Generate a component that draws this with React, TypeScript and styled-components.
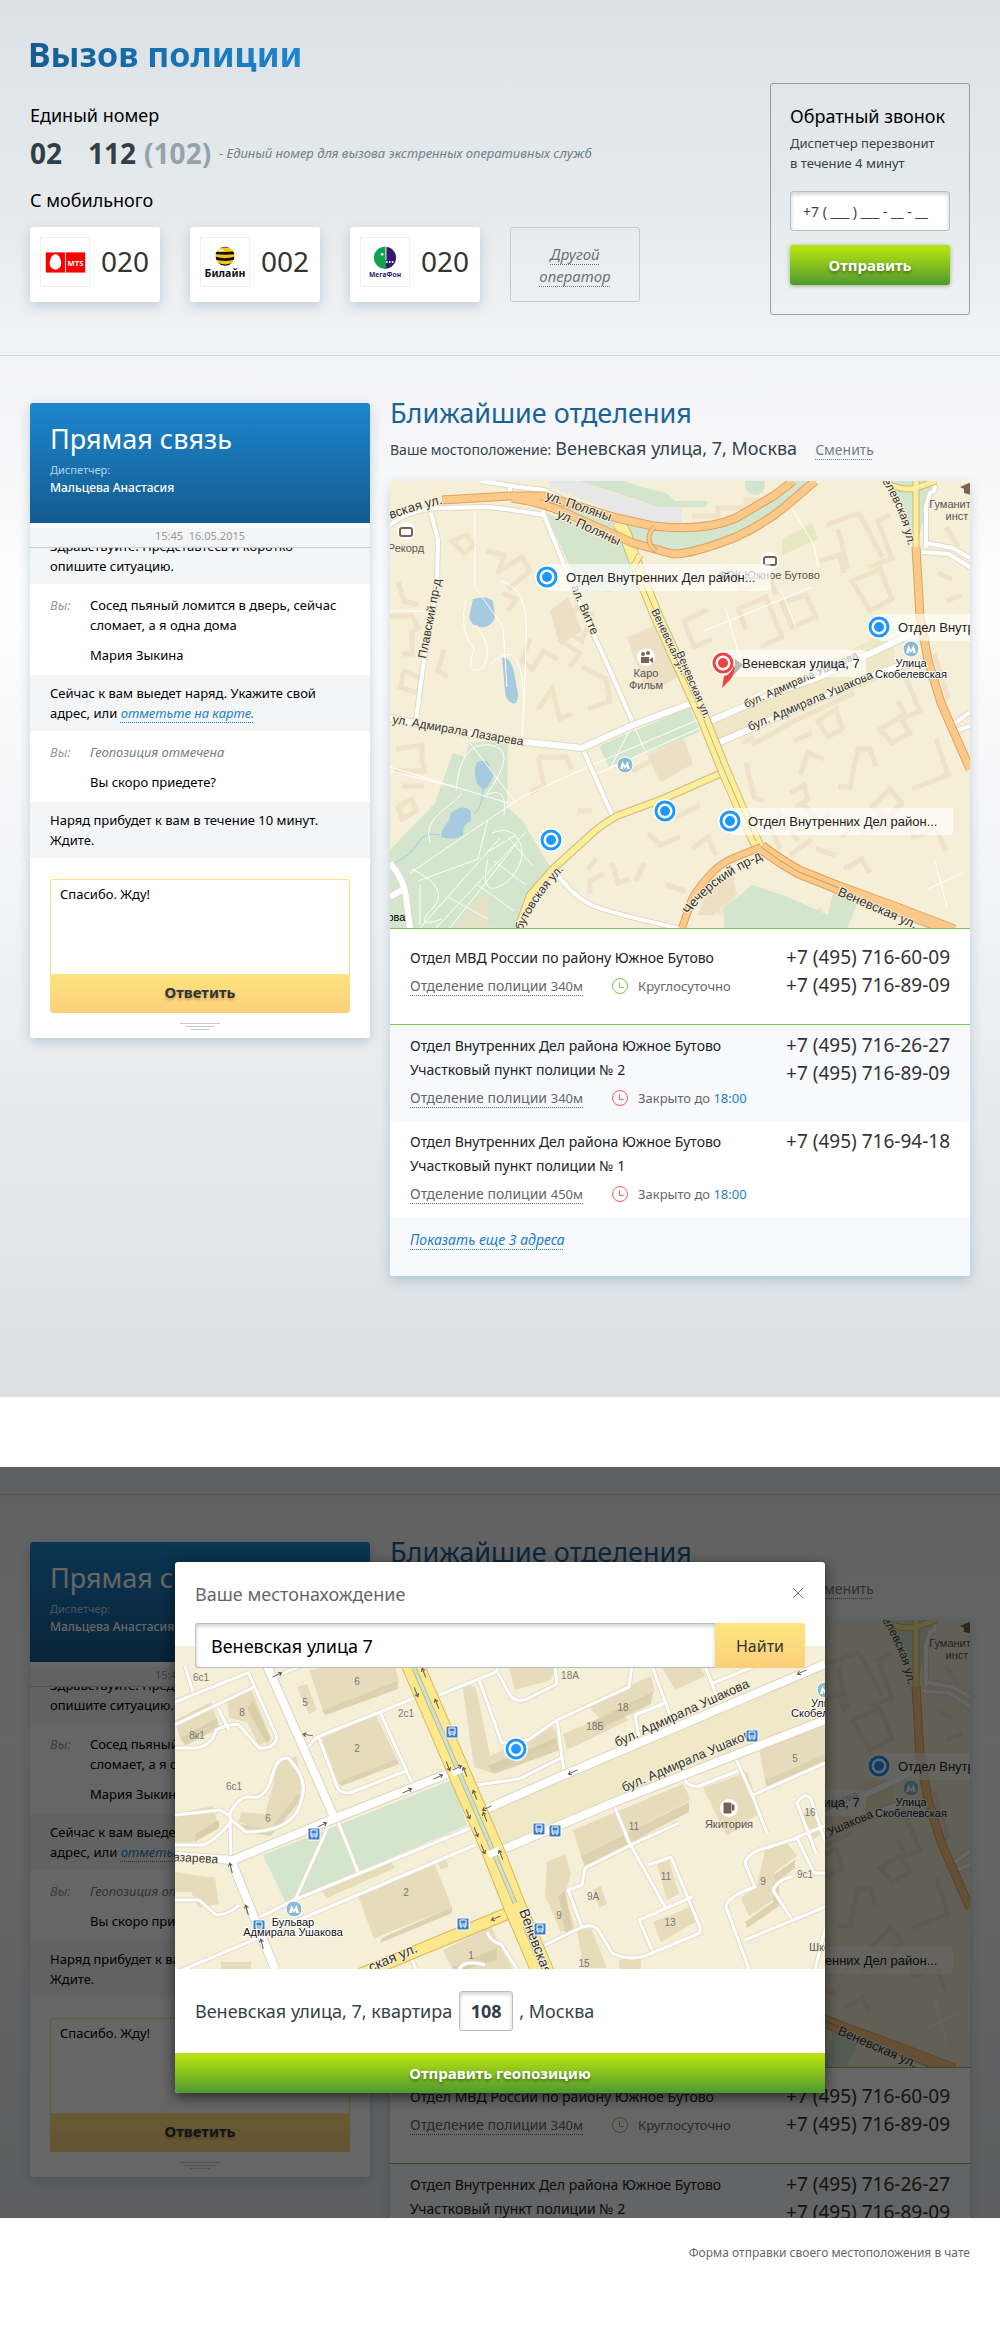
import React, { useId } from 'react';
import styled, { createGlobalStyle, css } from 'styled-components';

const mapFont = '"Liberation Sans", Arial, sans-serif';

const Global = createGlobalStyle`
  *, *::before, *::after { box-sizing: border-box; }
  body { margin: 0; background: #fff; color: #000; font-family: "Noto Sans", "Open Sans", sans-serif; font-size: 13px; line-height: 20px; }
  h1, h2, h3, p, ul { margin: 0; padding: 0; font-weight: 400; }
  ul { list-style: none; }
  button, input, textarea { font-family: inherit; margin: 0; }
  button { cursor: pointer; }
`;

/* ---------- shared ---------- */

const pageGradient = 'linear-gradient(#dbe1e5 0, #e7ebee 220px, #f2f3f5 356px, #fefefe 600px, #f2f3f5 900px, #d9dfe3 1397px)';
const cardShadow = '0 4px 12px rgba(110, 150, 180, 0.4)';

const DottedLink = styled.a<{ $size?: number; $color?: string; $italic?: boolean }>`
  color: ${(p) => p.$color || '#6b7376'};
  font-size: ${(p) => p.$size || 14}px;
  font-style: ${(p) => (p.$italic ? 'italic' : 'normal')};
  text-decoration: underline dotted 1px;
  text-underline-offset: 4px;
  text-decoration-skip-ink: none;
`;

const GreenButton = styled.button<{ $wide?: boolean }>`
  display: block;
  width: 100%;
  height: 40px;
  border: 0;
  border-radius: ${(p) => (p.$wide ? '0 0 3px 3px' : '3px')};
  background: linear-gradient(#b3e011 10%, #4f9a30);
  box-shadow: ${(p) => (p.$wide ? 'none' : '0 1px 4px rgba(80, 150, 50, 0.6)')};
  color: #fff;
  font-size: 15px;
  font-weight: 700;
  text-shadow: 0 2px 3px rgba(0, 0, 0, 0.4);
`;

const insetField = css`
  border: 1px solid #b9c0c4;
  border-radius: 3px;
  background: #fff;
  box-shadow: inset 0 2px 4px rgba(0, 0, 0, 0.2);
  outline: 0;
`;

/* ---------- header ---------- */

const Page = styled.main`
  background: ${pageGradient};
`;

const Header = styled.header`
  display: flex;
  justify-content: space-between;
  align-items: flex-start;
  gap: 30px;
  padding: 30px 30px 40px;
  border-bottom: 1px solid #d2d7da;
`;

const Title = styled.h1`
  width: fit-content;
  margin: 0 0 23px -2px;
  background: linear-gradient(90deg, #135c92, #1d86cf);
  background-clip: text;
  color: transparent;
  font-size: 34px;
  font-weight: 700;
  line-height: 48px;
`;

const SubTitle = styled.h2`
  font-size: 18px;
  line-height: 28px;
`;

const Numbers = styled.div`
  display: flex;
  align-items: center;
  margin: 6px 0 15px;
  color: #303f47;
  font-size: 28px;
  font-weight: 700;
  line-height: 36px;
`;

const Short = styled.span`
  margin-right: 26px;
`;

const Faded = styled.span`
  margin-left: 8px;
  color: #95a3ab;
`;

const Note = styled.em`
  margin-left: 8px;
  color: #6f8187;
  font-size: 13px;
  font-weight: 400;
  line-height: 20px;
`;

const Operators = styled.ul`
  display: flex;
  flex-wrap: wrap;
  gap: 30px;
  margin-top: 13px;
`;

const Operator = styled.li`
  display: flex;
  gap: 11px;
  width: 130px;
  height: 75px;
  padding: 10px;
  border-radius: 3px;
  background: #fff;
  box-shadow: ${cardShadow};
  color: #333;
  font-size: 28px;
  line-height: 48px;
`;

const Logo = styled.svg`
  flex: none;
  width: 50px;
  height: 50px;
  border: 1px solid #f0f0f0;
`;

const OtherOperator = styled.li`
  display: flex;
  width: 130px;
  height: 75px;
  border: 1px solid #c5cdd2;
  border-radius: 3px;
  align-items: center;
  justify-content: center;
  text-align: center;
  line-height: 22px;
`;

const Callback = styled.form`
  flex: none;
  width: 200px;
  margin-top: 53px;
  padding: 18px 19px 29px;
  border: 1px solid #9a9fa3;
  border-radius: 3px;
`;

const CallbackText = styled.p`
  margin: 3px 0 18px;
  color: #34434a;
`;

const PhoneInput = styled.input`
  display: block;
  ${insetField}
  width: 100%;
  height: 40px;
  margin-bottom: 14px;
  padding: 0 12px;
  color: #34434a;
  font-size: 14px;
`;

function MtsLogo() {
  return (
    <Logo viewBox="0 0 50 50" role="img" aria-label="МТС">
      <rect x="5" y="15" width="41" height="21" fill="#fb0000" />
      <path d="M25.500 15v21" stroke="#fff" strokeWidth="1" />
      <path d="M15 17c4 0 6 6 6 9.500a6 6.500 0 0 1-12 0C9 23 11 17 15 17z" fill="#fff" />
      <text x="36" y="29" textAnchor="middle" fontSize="8" fontWeight="700" fill="#fff">MTS</text>
    </Logo>
  );
}

function BeelineLogo() {
  const clip = useId();
  return (
    <Logo viewBox="0 0 50 50" role="img" aria-label="Билайн">
      <clipPath id={clip}><circle cx="25" cy="19" r="10" /></clipPath>
      <g clipPath={`url(#${clip})`}>
        <rect x="15" y="9" width="20" height="20" fill="#fcc21d" />
        <path d="M15 10q10-3 20 0M15 15.500q10 1 20 0M15 21q10 3 20 0M15 27q10 4 20 0" stroke="#111" strokeWidth="3" fill="none" />
        <ellipse cx="20" cy="13" rx="4" ry="1" fill="#fff6c8" />
      </g>
      <text x="25" y="41" textAnchor="middle" fontSize="11" fontWeight="700" fill="#111">Билайн</text>
    </Logo>
  );
}

function MegafonLogo() {
  return (
    <Logo viewBox="0 0 50 50" role="img" aria-label="МегаФон">
      <path d="M25 9a11.500 11.500 0 0 0 0 23z" fill="#0fa14c" />
      <path d="M25 9a11.500 11.500 0 0 1 0 23z" fill="#33186b" />
      <path d="M25 9v11l-3 6h2v6h2V9z" fill="#0fa14c" />
      <path d="M26 9v14" stroke="#fff" strokeWidth="1" />
      <circle cx="22" cy="17" r="1.500" fill="#fff" />
      <g fill="#fff"><circle cx="27" cy="25" r="1" /><circle cx="30" cy="25" r="1" /><circle cx="33" cy="25" r="1" /></g>
      <text x="25" y="41" textAnchor="middle" fontSize="7" fontWeight="700" fill="#33186b">МегаФон</text>
    </Logo>
  );
}

function EmergencyHeader() {
  return (
    <Header>
      <div>
        <Title>Вызов полиции</Title>
        <SubTitle>Единый номер</SubTitle>
        <Numbers>
          <Short>02</Short>
          <span>112</span>
          <Faded>(102)</Faded>
          <Note>- Единый номер для вызова экстренных оперативных служб</Note>
        </Numbers>
        <SubTitle>С мобильного</SubTitle>
        <Operators>
          <Operator><MtsLogo />020</Operator>
          <Operator><BeelineLogo />002</Operator>
          <Operator><MegafonLogo />020</Operator>
          <OtherOperator>
            <DottedLink href="#operators" $size={15} $italic>Другой<br />оператор</DottedLink>
          </OtherOperator>
        </Operators>
      </div>
      <Callback onSubmit={(e) => e.preventDefault()}>
        <SubTitle>Обратный звонок</SubTitle>
        <CallbackText>Диспетчер перезвонит<br />в течение 4 минут</CallbackText>
        <PhoneInput type="tel" aria-label="Телефон" defaultValue="+7 ( ___ ) ___ - __ - __" />
        <GreenButton type="submit">Отправить</GreenButton>
      </Callback>
    </Header>
  );
}

/* ---------- chat ---------- */

const Workspace = styled.section`
  display: grid;
  grid-template-columns: 340px minmax(0, 1fr);
  align-items: start;
  gap: 20px;
  padding: 39px 30px 121px;
`;

const Chat = styled.section`
  margin-top: 8px;
  border-radius: 3px;
  background: #fff;
  box-shadow: ${cardShadow};
`;

const ChatHead = styled.header`
  padding: 18px 20px 26px;
  border-radius: 3px 3px 0 0;
  background: linear-gradient(#1d86cd, #135b90);
  color: #fff;
  line-height: 18px;
`;

const ChatTitle = styled.h2`
  margin-bottom: 4px;
  font-size: 27px;
  line-height: 36px;
`;

const Role = styled.p`
  color: #b5d6ec;
  font-size: 11px;
`;

const Agent = styled.p`
  font-size: 12px;
  font-weight: 500;
`;

const Stamp = styled.p`
  height: 20px;
  margin-top: 5px;
  border-bottom: 1px solid #ccced0;
  background: #f4f5f7;
  color: #999;
  font-size: 11px;
  line-height: 16px;
  text-align: center;
  white-space: pre;
`;

const Log = styled.div`
  display: flex;
  flex-direction: column;
  justify-content: flex-end;
  height: 310px;
  overflow: hidden;
`;

const Message = styled.div`
  flex: none;
  padding: 8px 20px;
  background: #f4f5f7;
`;

const OwnMessage = styled.div`
  display: grid;
  flex: none;
  grid-template-columns: 40px 1fr;
  padding: 11px 20px 10px;
`;

const You = styled.em`
  color: #999;
`;

const Lines = styled.div`
  display: grid;
  gap: 10px;
`;

const Muted = styled.em`
  color: #728086;
`;

const Composer = styled.form`
  padding: 21px 20px 8px;
`;

const Reply = styled.textarea`
  display: block;
  width: 100%;
  height: 95px;
  padding: 4px 9px;
  border: 1px solid #fde07c;
  border-bottom: 0;
  border-radius: 3px 3px 0 0;
  outline: 0;
  background: #fff;
  resize: none;
  color: #000;
  font-size: 13px;
  line-height: 20px;
`;

const yellow = css`
  border: 0;
  background: linear-gradient(#fee57f, #fccf7b);
  color: #333;
`;

const ReplyButton = styled.button`
  ${yellow}
  display: block;
  width: 100%;
  height: 39px;
  padding: 0 0 3px;
  border-radius: 0 0 3px 3px;
  font-size: 15px;
  font-weight: 700;
  text-shadow: 0 2px 3px rgba(0, 0, 0, 0.25);
`;

const Grip = styled.div`
  display: grid;
  justify-items: center;
  gap: 2px;
  margin-top: 10px;
`;

const GripLine = styled.span<{ $w: number }>`
  width: ${(p) => p.$w}px;
  height: 1px;
  background: #c3cdd3;
`;

function ChatPanel() {
  return (
    <Chat>
      <ChatHead>
        <ChatTitle>Прямая связь</ChatTitle>
        <Role>Диспетчер:</Role>
        <Agent>Мальцева Анастасия</Agent>
      </ChatHead>
      <Stamp>15:45  16.05.2015</Stamp>
      <Log>
        <Message>Здравствуйте. Представтесь и коротко<br />опишите ситуацию.</Message>
        <OwnMessage>
          <You>Вы:</You>
          <Lines>
            <p>Сосед пьяный ломится в дверь, сейчас сломает, а я одна дома</p>
            <p>Мария Зыкина</p>
          </Lines>
        </OwnMessage>
        <Message>
          Сейчас к вам выедет наряд. Укажите свой адрес, или{' '}
          <DottedLink href="#map" $size={13} $color="#1d80c6" $italic>отметьте на карте.</DottedLink>
        </Message>
        <OwnMessage>
          <You>Вы:</You>
          <Lines>
            <Muted>Геопозиция отмечена</Muted>
            <p>Вы скоро приедете?</p>
          </Lines>
        </OwnMessage>
        <Message>Наряд прибудет к вам в течение 10 минут.<br />Ждите.</Message>
      </Log>
      <Composer onSubmit={(e) => e.preventDefault()}>
        <Reply aria-label="Сообщение" defaultValue="Спасибо. Жду!" />
        <ReplyButton type="submit">Ответить</ReplyButton>
        <Grip><GripLine $w={40} /><GripLine $w={30} /><GripLine $w={20} /></Grip>
      </Composer>
    </Chat>
  );
}

/* ---------- maps ---------- */

const MapSvg = styled.svg<{ $h: number }>`
  display: block;
  width: 100%;
  height: ${(p) => p.$h}px;
  background: #f6efd8;
  font-family: ${mapFont};
`;

type RoadProps = { d: string; w: number; fill: string; edge: string };

function Road({ d, w, fill, edge }: RoadProps) {
  return (
    <g fill="none" strokeLinejoin="round">
      <path d={d} stroke={edge} strokeWidth={w + 2} />
      <path d={d} stroke={fill} strokeWidth={w} />
    </g>
  );
}

function Target({ x, y, color = '#1e98ff' }: { x: number; y: number; color?: string }) {
  return (
    <g>
      <circle cx={x} cy={y} r="12" fill="#fff" />
      <circle cx={x} cy={y} r="9" fill="#fff" stroke={color} strokeWidth="3" />
      <circle cx={x} cy={y} r="5" fill={color} />
    </g>
  );
}

function Metro({ x, y }: { x: number; y: number }) {
  return (
    <g transform={`translate(${x} ${y})`}>
      <circle r="8" fill="#8abcd1" stroke="#fff" strokeWidth="1" />
      <path d="M-5 4l2.500-8L0 1l2.500-5L5 4H2L1.500 1 0 4l-1.500-3L-2 4z" fill="#fff" />
    </g>
  );
}

type StreetProps = { d: string; text: string; size?: number };

function Street({ d, text, size = 12 }: StreetProps) {
  const id = useId();
  return (
    <g>
      <path id={id} d={d} fill="none" />
      <text fontSize={size} fill="#333" stroke="#f6efd8" strokeWidth="2" paintOrder="stroke">
        <textPath href={`#${id}`}>{text}</textPath>
      </text>
    </g>
  );
}

const districtBuildings = [
  'M0 135h22l6 12-6 4v22h-10', 'M8 100l6 20 14 4', 'M14 190l18 8-4 14-18-6z', 'M54 168l-6 22 10 6', 'M62 60l14-6 8 10-10 8z',
  'M106 92l26-16 8 14-22 18', 'M96 70l18 4-4 14', 'M176 150l10-24 16 8-10 26z', 'M168 158l22 14-10 14', 'M140 158l-8 22 10 8 12-18 14 8',
  'M112 112l14 6-8 12', 'M192 56l24 10', 'M216 110l26-14', 'M240 158l22-10 18 42-24 12z', 'M192 186l24 12 4 22-22 8', 'M148 228l14-20 8 30 12-6',
  'M302 35h26v-8h28v-8h14', 'M310 96l34-10 8 22 28-8', 'M318 128l-24 12 10 26 18-8', 'M362 104l18-8 6 18', 'M356 148l-8-20 28-12 16 40-22 10',
  'M402 146l-10-24 24-8 10 22z', 'M436 44l34-12M448 48l10 40', 'M430 80l20-6 4 18', 'M470 34l22 42M500 34l-12 6 14 38-24 8', 'M462 100l28-12 12 30-22 12z',
  'M556 120l16-6M556 46l12 20M548 92l14 6', 'M6 268l26-4v18M4 290h30v-8M12 305h22M8 326l14-8 4 12-14 8z', 'M148 276h28l6 12M148 276l6 28-14 8', 'M188 330h14M110 330v26',
  'M260 274l32-16 8 24-28 16z', 'M242 290l26-14', 'M276 322l10 14 24-12M258 352l12 12 20-8', 'M302 368l16-12 8 18', 'M352 262l12-6M356 282l8 34 10 4M362 264l42-24 60-28',
  'M404 260l18-8M410 294l8-22 16 6M400 312l14-8 4 14-12 8', 'M428 240l18-12 6 20-14 8z', 'M458 196l54-8 18 42-14 6-8-16', 'M448 306h12l8-38h12l6 18',
  'M490 248l20-12 10 16-18 10z', 'M482 326l18-18 12 14-16 16z', 'M412 322l20 22 8-12M386 328l22 32M400 374l22-16M426 368l20 6', 'M470 352l50-12 4 18',
  'M454 388l18-10 8 14M522 308l36-14-12-36', 'M382 350l8 18M200 412v-12l14-8M222 382l6 20 12-4', 'M84 416v24h14M246 400l8-18', 'M334 400l-14 26 12 6 14-22',
  'M412 438l20-10M350 438l8-10M526 356l20-10 10 24', 'M198 388l8-10M276 404l20 6M452 356l12-14', 'M544 172l14 44-8 8',
];

function DistrictMap() {
  const yellowRoad = { fill: '#fdee9b', edge: '#cdbb76' };
  const orangeRoad = { fill: '#fdc988', edge: '#dba263' };
  const whiteRoad = { fill: '#fff', edge: '#e0d9c6' };
  return (
    <MapSvg $h={447} viewBox="0 0 580 447" preserveAspectRatio="xMidYMid slice" role="img" aria-label="Карта отделений">
      <g fill="none" stroke="#eee2c8" strokeWidth="5">
        {districtBuildings.map((d) => <path key={d} d={d} />)}
      </g>
      <g fill="#ecdfc4">
        <path d="M240 156l24-10 24 50-26 14zM258 276l34-18 10 24-32 18zM160 130l18-14 14 34-22 14z" />
        <path d="M320 398l22-12 4 26-22 22h-16zM350 424l10-18 20 12z" />
      </g>
      <g fill="#d3e5cd">
        <path d="M124 20L154 12l73 25 36 10 43 1 40-11 39-23 18-14h22l-28 24-51 32-40 15-23 2-40-11-63-28-56-17z" />
        <path d="M156 32l87 32 14 46-66 0zM188 0h46l18 6 24 6 10 8 32 0-2 6-45 1-44-15zM500 0h44l-18 66z" />
        <path d="M63 272l12 4 4-14 39-4-1 68 15 13 28 47-32 61H0v-78l45-47z" />
        <path d="M209 265l91-39 10 25-91 35zM362 404l36 12 40 18 5-22 25 10-11 25H334v-20z" />
        <circle cx="365" cy="4" r="10" />
      </g>
      <path d="M85 420l14-6v30l20 3H66l14-20z" fill="#ecdfc4" opacity="0.7" />
      <path d="M392 58l30-16 6 16-36 16z" fill="#e6e8c0" />
      <path d="M160 0h28l79 26h25v18l-29-2-36-10-67-26z" fill="#e7e7e7" />
      <g fill="#a6cade">
        <path d="M83 118q14-4 20 2l2 16q-4 12-16 10-12-4-9-14zM112 177q8-2 12 14l4 22q0 12-6 9-6-2-7-12z" />
        <path d="M87 281q12-4 12 4l5 8q-4 12-10 16l-6-5q-6-14-1-23zM61 332q12-10 20-2v10q-8 2-8 14-8 6-22 2 0-8 8-16z" />
      </g>
      <path d="M93 306q0 20-9 27M50 354q-16-4-22 8t-28 22" fill="none" stroke="#a6cade" strokeWidth="1" />
      <g fill="none" stroke="#fff" strokeWidth="1">
        <path d="M85 26v80l28 40 4 60M76 118q-8 30 8 50-10 30 10 18 10-20-8-42M110 100q30 6 26 60l-2 70M0 130h40M100 184q40-40 32 72" />
        <path d="M80 262l46 60M66 310q4-50 34-46t-4 50q22-10 18 20M0 286l118 36M0 290l64 16M20 392l112-76 70-32 108-46M40 362q-6-18 12-32t20-18" />
        <path d="M28 400l60-22 10-40M30 447l80-90M46 447l90-96M60 447l66-84M22 388q40 20 20 40t10 10M96 372l30-18M118 356l24 28M104 380l32 24M88 404l36 26" />
        <path d="M102 352q20-8 28 10t-14 40q-28 18-18-24M30 404v40M58 416l40 22M243 242l12 28M243 242l-22 44M314 150l108-44M336 128l14 50M400 24l24 40 4 22M390 106l16 40M314 241l74-38M204 294l112-50M545 380l12 46M538 408l34-16" />
      </g>
      <path d="M318 241l186-94v46l-174 68z" fill="#efe8c6" />
      <Road {...whiteRoad} w={4} d="M91 0l30 5 33 4 20 10M120 4v12M0 44q20-16 50-17l50-1q30 4 54 8M152 16l2 18 18 45 16 40 30 66 25 57M41 32l7 27-1 43-14 84-7 53M192 266l31 70M164 389q20 28 40 36t84 22M540 0q10 8 0 12l-4 14v40M532 71l27 2 24 15M536 62l27 5 17 10M563 251l17-6M561 245l19-14" />
      <Road {...whiteRoad} w={6} d="M0 237l69 14 67 10 56 6 51-23 59-22M0 382q14 16 16 34l4 31M0 416l14-8M318 241l67-29 44-16 95-44M330 261l150-65 36-14" />
      <Road {...yellowRoad} w={6} d="M334 291l-59 26-48 18q-18 10-30 22l-33 30-24 27-12 33" />
      <Road {...yellowRoad} w={11} d="M227 41q8 8 11 20l13 35 16 40 23 50 24 53 20 50 16 37 20 44" />
      <path d="M250 96l17 40 23 50 24 53 20 50 16 37 16 34" fill="none" stroke="#bcb079" strokeWidth="1" />
      <Road {...yellowRoad} w={5} d="M500 4q16 6 26 3L546 0M526 0v66M242 88l8-14" />
      <Road {...orangeRoad} w={7} d="M52 19l68-4h34l73 22 36 8q50 6 83-8l39-23 18-14M122 17q30 4 58 17l63 28 40 11q20 0 63-17 30-14 51-32l28-24M526 66l4 70 8 43 13 43 29 66" />
      <Road {...orangeRoad} w={3} d="M265 46q-6 4-6 12t8 12" />
      <Road {...orangeRoad} w={6} d="M371 366l-25 10q-16 6-28 20-16 18-18 28l-8 23" />
      <Road {...orangeRoad} w={11} d="M371 366q18 14 38 25l40 16 55 20 60 23" />
      <path d="M371 366q18 14 38 25l40 16" fill="none" stroke="#c79a62" strokeWidth="1" />

      <Street d="M1 38q26-10 60-17" text="вская ул." size={13} />
      <Street d="M155 18l75 26" text="ул. Поляны" size={13} />
      <Street d="M166 36l78 36" text="ул. Поляны" size={13} />
      <Street d="M492 0q22 34 28 76" text="елевская ул." size={12} />
      <Street d="M36 178l16-84" text="Плавский пр-д" size={12} />
      <Street d="M181 106l28 66" text="ал. Витте" size={12} />
      <Street d="M261 130l40 84" text="Веневская ул." size={11} />
      <Street d="M286 172l36 84" text="Веневская ул." size={11} />
      <Street d="M356 227l130-58" text="бул. Адмирала Ушакова" size={11} />
      <Street d="M360 250l140-60" text="бул. Адмирала Ушакова" size={12} />
      <Street d="M2 242l138 24" text="ул. Адмирала Лазарева" size={12} />
      <Street d="M300 434q16-30 80-60" text="Чечерский пр-д" size={13} />
      <Street d="M447 414l96 42" text="Веневская ул." size={13} />
      <Street d="M132 450q12-30 46-66" text="бутовская ул." size={12} />

      <g fontSize="11" fill="#555" textAnchor="middle">
        <text x="16" y="71">Рекорд</text>
        <text x="379" y="98">ФОК Южное Бутово</text>
        <text x="256" y="196">Каро</text>
        <text x="256" y="208">Фильм</text>
        <text x="560" y="27">Гуманит</text>
        <text x="567" y="39">инст</text>
        <text x="4" y="440" fill="#000">кова</text>
      </g>
      <g fill="#fff"><circle cx="16" cy="50" r="9" /><circle cx="380" cy="80" r="9" /><circle cx="256" cy="176" r="9" /></g>
      <g fill="none" stroke="#786253" strokeWidth="2"><rect x="10" y="47" width="12" height="8" rx="2" /><rect x="374" y="76" width="12" height="8" rx="2" /></g>
      <g fill="#786253"><rect x="251" y="176" width="8" height="6" /><path d="M259 179l4-3v6z" /><circle cx="253" cy="173" r="2" /><circle cx="258" cy="172" r="2" /><path d="M570 6l9-4 3 1v11l-8-2v-4z" /></g>
      <Metro x={235} y={284} />
      <Metro x={521} y={168} />
      <g fontSize="11" fill="#111" textAnchor="middle" stroke="#fff" strokeWidth="2" paintOrder="stroke">
        <text x="521" y="186">Улица</text>
        <text x="521" y="197">Скобелевская</text>
      </g>

      <g fill="#fff" fillOpacity="0.65">
        <rect x="157" y="83" width="224" height="27" rx="3" />
        <rect x="489" y="133" width="100" height="27" rx="3" />
        <rect x="333" y="169" width="143" height="27" rx="3" />
        <rect x="340" y="327" width="223" height="27" rx="3" />
      </g>
      <path d="M333 206l20-22-8-6z" fill="#777" opacity="0.5" />
      <Target x={157} y={96} />
      <Target x={489} y={146} />
      <Target x={333} y={182} color="#ed4543" />
      <path d="M344 184q-2 9-10 11l-2 12 8-8q6-8 4-15z" fill="#ed4543" />
      <Target x={275} y={330} />
      <Target x={340} y={340} />
      <Target x={161} y={359} />
      <g fontSize="13" fill="#222">
        <text x="176" y="101">Отдел Внутренних Дел район...</text>
        <text x="508" y="151">Отдел Внутренних Дел район...</text>
        <text x="352" y="187">Веневская улица, 7</text>
        <text x="358" y="345">Отдел Внутренних Дел район...</text>
      </g>
    </MapSvg>
  );
}

const houseNumbers: [number, number, string][] = [
  [26, 35, '6с1'], [182, 39, '6'], [130, 60, '5'], [67, 70, '8'], [22, 93, '8к1'], [231, 71, '2с1'], [182, 106, '2'], [395, 33, '18А'],
  [448, 65, '18'], [420, 84, '18Б'], [59, 144, '6с1'], [93, 176, '6'], [620, 116, '5'], [459, 184, '11'], [635, 170, '16'], [231, 250, '2'],
  [491, 234, '11'], [418, 254, '9А'], [384, 273, '9'], [588, 239, '9'], [630, 232, '9с1'], [495, 280, '13'], [296, 313, '1'], [409, 321, '15'],
];

const stops = [[277, 86], [139, 188], [364, 183], [380, 185], [577, 90], [84, 280], [288, 278], [365, 283]];

const arrows: [number, number, number][] = [
  [102, 29, -25], [133, 89, 190], [232, 145, -25], [263, 131, -25], [282, 122, -25], [147, 179, -25], [241, 46, 68], [249, 27, 248], [262, 58, 248],
  [273, 120, 68], [290, 126, 248], [300, 149, 248], [293, 168, 68], [310, 171, 248], [301, 186, 68], [308, 203, 68], [326, 209, 248],
  [312, 162, 155], [398, 126, 155], [627, 26, 155], [56, 222, 255], [72, 264, 255], [87, 298, 255], [321, 272, 155],
];

function StreetMap() {
  return (
    <MapSvg $h={323} viewBox="0 0 650 323" preserveAspectRatio="xMidYMid slice" role="img" aria-label="Карта местонахождения">
      <path d="M309 164l82-37L650 16v56l-213 84-118 51z" fill="#f0e9c8" />
      <g fill="#e6dcbb">
        <path d="M134 24l84-14 6 26-76 29zM147 92l54-23 21 44-59 23zM182 247l78-28 17 42-70 28-8 4zM0 74l36-18 6 18-36 22zM52 52l24-10 20 50-12 8-12-24-18-4z" />
        <path d="M122 41l10-3 10 26-8 4zM287 36l14 6 14 68 62-30 8 14-68 33-18-6zM332 14h50l-6 20-36 10zM412 58l64-28 4 16-52 30zM388 88l52-22 14 8-62 30z" />
        <path d="M484 16l34-12 12 26-30 14zM398 184l110-46 8 16-110 56zM584 104l66-26v30l-60 26zM528 142l44-16 14 40-34 24z" />
        <path d="M0 168l38-8 6 22-28 14H0zM66 166l24 2 14-52 18-6 4 34-34 42-28-10zM0 226l40 6 4 26-20 4-8-16H0zM146 244l68-32 6 10-68 30z" />
        <path d="M372 216l18-8 6 20-6 20 10 34-14 4-16-36zM402 284l14-2 16 40h-24zM566 252l16-12 8-36 20-10 12 16-22 16-2 28-24 16zM482 218l12-4 10 34-12 6z" />
        <path d="M478 276l40-16 6 14-38 22zM268 304l48-24 8 18 14 26h-60zM418 244l8-4 6 18-8 4zM628 168l10-8 10 26-10 8zM262 216l8-4 4 8-8 4zM444 314l22-4v14h-22zM46 316h30v8H46z" />
      </g>
      <g fill="#d6cba5" opacity="0.8">
        <path d="M147 65l76-30v8l-72 26zM163 136l59-23 2 5-58 22zM207 292l70-31v6l-72 30zM6 92l36-20 2 10-34 18zM313 120l68-28 4 12-66 24zM416 76l62-30-2 12-54 26zM406 210l108-54v10l-104 54zM590 134l60-26v10l-58 24zM66 178l28 6 30-38 2 8-30 36-26-4zM20 188l24-14v8l-24 14zM384 250l6 36 8 2-8-44zM570 276l28-20 2-28 20-14v8l-16 12v26l-32 22zM276 322l46-20v12l-40 12zM72 62l20 36 4-4-18-40z" />
      </g>
      <path d="M88 209l189-75 15 45-181 78z" fill="#d3e5cd" />
      <Road fill="#fff" edge="#e2dbc7" w={3} d="M10 20l8 26M0 56l75-30M94 34l31-14M0 79l79-38M73 26l29 65q-2 12-18 11L64 79q-10-2-23 5-4 16-20 18H0M43 62l11 22M130 104l12-13 63-25 34-14M205 66l32 71M144 92l19 51q6 6 14 3l54-21M264 49l57-23 8-22M323 27l13 24q8 6 16 2l30-15-2-18M304 34l23 63 26-3 29-20 72-33 4-30M382 74l7 52M302 139l42-6 42-21M477 20l21 57M490 57l-30 12 4 23M530 20l14 36M538 37l74-30" />
      <Road fill="#fff" edge="#e2dbc7" w={3} d="M56 216l-1-49q10-18 20-16 16 4 23-24 4-16 15-15 20 20 14 40-6 34-56 34l-16-13M0 169l45-5 10 6M0 199h28q12-4 27-22M0 254h24l17 15q12 0 23-10M79 274l40-20 179-73M100 284l200-85M0 327l83-35M153 181l-34 75M163 176l20 50" />
      <Road fill="#fff" edge="#e2dbc7" w={3} d="M439 159l15 37 36 65M504 177l-42 19-52 26-3 17-14 5 14 37-37 18M407 281q12-4 17 4l13 22q20 10 40 0l48-20v-6l-29-70-23 8M477 304l-13-30 53-23M508 132q6 10 16 8l39-15M557 104l21 47 14 36M578 149l72-32M574 323l-23-62q0-10 29-20l-10-24q2-8 14-13l38-12 17 35h11M620 192l30-12M570 294l80-33M622 157l19 50M622 157q8-12 14-4l14 42M598 244l18 28M598 244q4-10 20-14M640 323l10-40M312 286q4 10 14 12l16 25M241 323l-6-14M284 323q6-10 26-4" />
      <Road fill="#fff" edge="#dcd4bf" w={8} d="M87 0l6 22 66 149M56 214l44 109M0 210l58 4 105-43 114-45M309 164l82-36L650 18M319 207l118-50L650 74" />
      <Road fill="#ffe88c" edge="#d1b860" w={11} d="M336 266l-150 62" />
      <Road fill="#ffe88c" edge="#d1b860" w={21} d="M230 0l9 22 79 183 22 56 30 70" />
      <path d="M239 22l79 183 22 52M350 280l18 43" fill="none" stroke="#b9bd97" strokeWidth="5" />
      <path d="M239 22l79 183 22 52M350 280l18 43" fill="none" stroke="#cfe2c8" strokeWidth="3" />
      <path d="M277 127l12-5M313 209l12-5" stroke="#fff" strokeWidth="7" />
      <g fill="none" stroke="#555" strokeWidth="1">
        {arrows.map(([x, y, a]) => <path key={`${x}-${y}`} transform={`translate(${x} ${y}) rotate(${a})`} d="M-5 0H5M2-2l3 2-3 2" />)}
      </g>
      <Street d="M442 101l150-68" text="бул. Адмирала Ушакова" size={13} />
      <Street d="M449 146l160-68" text="бул. Адмирала Ушакова" size={13} />
      <Street d="M-2 215l60 3" text="азарева" size={12} />
      <Street d="M344 265l28 74" text="Веневская" size={14} />
      <Street d="M196 326l70-30" text="ская ул." size={14} />
      <g fontSize="10" fill="#777" textAnchor="middle">
        {houseNumbers.map(([x, y, n]) => <text key={`${x}-${y}`} x={x} y={y}>{n}</text>)}
      </g>
      {stops.map(([x, y]) => (
        <g key={`${x}-${y}`} transform={`translate(${x} ${y})`}>
          <rect x="-6" y="-6" width="12" height="12" rx="1" fill="#3b7dc7" stroke="#fff" strokeWidth="1" />
          <path d="M-3-4h6v6h-6zM-3 0h6M-2 2v2M2 2v2" fill="none" stroke="#fff" strokeWidth="1" />
        </g>
      ))}
      <circle cx="554" cy="162" r="9" fill="#fff" />
      <path d="M549 157h7v10h-7zM557 159h2v5h-2" fill="#786253" stroke="#786253" strokeWidth="1" />
      <Metro x={119} y={263} />
      <Metro x={650} y={44} />
      <g fontSize="11" fill="#111" stroke="#fff" strokeWidth="2" paintOrder="stroke">
        <text x="118" y="280" textAnchor="middle">Бульвар</text>
        <text x="118" y="290" textAnchor="middle">Адмирала Ушакова</text>
        <text x="636" y="61">Улица</text>
        <text x="616" y="71">Скобелевская</text>
      </g>
      <g fontSize="11" fill="#555">
        <text x="554" y="182" textAnchor="middle">Якитория</text>
        <text x="634" y="305">Школа</text>
      </g>
      <Target x={341} y={103} />
    </MapSvg>
  );
}

/* ---------- departments ---------- */

const SectionTitle = styled.h2`
  margin-bottom: 3px;
  color: #19639b;
  font-size: 27px;
  line-height: 36px;
`;

const Location = styled.p`
  display: flex;
  align-items: baseline;
  height: 28px;
  margin-bottom: 19px;
  color: #34434a;
  font-size: 14px;
  line-height: 28px;
  white-space: nowrap;
`;

const Place = styled.span`
  margin: 0 18px 0 4px;
  font-size: 18px;
`;

const Panel = styled.div`
  overflow: hidden;
  border-radius: 0 0 3px 3px;
  background: #fff;
  box-shadow: ${cardShadow};
`;

const Department = styled.li<{ $nearest?: boolean; $tinted?: boolean }>`
  display: flex;
  justify-content: space-between;
  align-items: flex-start;
  padding: ${(p) => (p.$nearest ? '17px 20px 25px' : '9px 20px 11px')};
  border: solid #7dc452;
  border-width: ${(p) => (p.$nearest ? '1px 0' : '0')};
  background: ${(p) => (p.$tinted ? '#f7f9fc' : '#fff')};
`;

const Name = styled.h3`
  margin-bottom: 4px;
  color: #222;
  font-size: 14px;
  line-height: 24px;
`;

const Meta = styled.div`
  display: grid;
  grid-template-columns: 202px auto auto;
  justify-content: start;
  align-items: center;
  height: 24px;
  color: #666;
  font-size: 13px;
  line-height: 24px;
`;

const Distance = styled.span`
  font-size: 13px;
`;

const Clock = styled.svg`
  width: 16px;
  height: 16px;
  margin-right: 10px;
`;

const Until = styled.span`
  color: #1d80c6;
`;

const Phones = styled.div`
  margin-top: -3px;
  color: #333;
  font-size: 19px;
  line-height: 28px;
  text-align: right;
  white-space: nowrap;
`;

const More = styled.div`
  padding: 11px 20px 24px;
  background: #f7f9fc;
  font-size: 14px;
  line-height: 24px;
`;

type Dept = { name: string[]; distance: string; until?: string; phones: string[] };

const departments: Dept[] = [
  { name: ['Отдел МВД России по району Южное Бутово'], distance: '340м', phones: ['+7 (495) 716-60-09', '+7 (495) 716-89-09'] },
  { name: ['Отдел Внутренних Дел района Южное Бутово', 'Участковый пункт полиции № 2'], distance: '340м', until: '18:00', phones: ['+7 (495) 716-26-27', '+7 (495) 716-89-09'] },
  { name: ['Отдел Внутренних Дел района Южное Бутово', 'Участковый пункт полиции № 1'], distance: '450м', until: '18:00', phones: ['+7 (495) 716-94-18'] },
];

function Departments() {
  return (
    <section>
      <SectionTitle>Ближайшие отделения</SectionTitle>
      <Location>
        Ваше мостоположение: <Place>Веневская улица, 7, Москва</Place>
        <DottedLink href="#change" $color="#728086">Сменить</DottedLink>
      </Location>
      <Panel>
        <DistrictMap />
        <ul>
          {departments.map((d, i) => (
            <Department key={d.name.join()} $nearest={i === 0} $tinted={i === 1}>
              <div>
                <Name>{d.name.map((line) => <div key={line}>{line}</div>)}</Name>
                <Meta>
                  <div>
                    <DottedLink href="#station" $color="#666">Отделение полиции <Distance>{d.distance}</Distance></DottedLink>
                  </div>
                  <Clock viewBox="0 0 16 16" fill="none" stroke={d.until ? '#f75a5f' : '#7dc452'} aria-hidden="true">
                    <circle cx="8" cy="8" r="7.500" />
                    <path d="M7.500 4.500v5h4" />
                  </Clock>
                  {d.until ? <span>Закрыто до <Until>{d.until}</Until></span> : <span>Круглосуточно</span>}
                </Meta>
              </div>
              <Phones>{d.phones.map((p) => <div key={p}>{p}</div>)}</Phones>
            </Department>
          ))}
        </ul>
        <More><DottedLink href="#more" $color="#1d80c6" $italic>Показать еще 3 адреса</DottedLink></More>
      </Panel>
    </section>
  );
}

function WorkArea() {
  return (
    <Workspace>
      <ChatPanel />
      <Departments />
    </Workspace>
  );
}

/* ---------- geolocation dialog ---------- */

const Scene = styled.section`
  position: relative;
  height: 751px;
  margin-top: 70px;
  overflow: hidden;
  background: ${pageGradient} 0 -328px / 100% 1397px no-repeat;
`;

const HeaderEdge = styled.div`
  height: 28px;
  border-bottom: 1px solid #d2d7da;
`;

const Overlay = styled.div`
  position: absolute;
  inset: 0;
  display: flex;
  justify-content: center;
  align-items: flex-start;
  padding: 95px 20px 0;
  background: rgba(0, 0, 0, 0.6);
`;

const Dialog = styled.form`
  width: 100%;
  max-width: 650px;
  border-radius: 3px;
  background: #fff;
  box-shadow: 0 4px 14px rgba(0, 0, 0, 0.6);
`;

const DialogHead = styled.header`
  display: flex;
  justify-content: space-between;
  padding: 18px 20px 15px;
  color: #666;
`;

const Close = styled.button`
  display: grid;
  place-items: center;
  width: 14px;
  height: 26px;
  padding: 0;
  border: 0;
  background: none;
`;

const Search = styled.div`
  position: relative;
  display: flex;
  height: 45px;
  margin: 0 20px -22px;
`;

const Address = styled.input`
  ${insetField}
  flex: 1;
  min-width: 0;
  padding: 0 15px;
  border-right: 0;
  border-radius: 3px 0 0 3px;
  color: #000;
  font-size: 18px;
`;

const Find = styled.button`
  ${yellow}
  width: 90px;
  border-radius: 0 2px 2px 0;
  font-size: 16px;
`;

const Flat = styled.div`
  display: flex;
  align-items: center;
  padding: 22px 20px;
  color: #34434a;
  font-size: 18px;
  line-height: 28px;
  white-space: pre;
`;

const FlatInput = styled.input`
  ${insetField}
  width: 54px;
  height: 40px;
  margin: 0 6px 0 7px;
  padding: 0;
  color: #303f47;
  font-size: 18px;
  font-weight: 700;
  text-align: center;
`;

const Caption = styled.footer`
  padding: 25px 30px 64px;
  color: #666;
  font-size: 12px;
  text-align: right;
`;

function GeoDialog() {
  const flat = useId();
  return (
    <Dialog role="dialog" aria-label="Ваше местонахождение" onSubmit={(e) => e.preventDefault()}>
      <DialogHead>
        <SubTitle>Ваше местонахождение</SubTitle>
        <Close type="button" aria-label="Закрыть">
          <svg width="10" height="10" viewBox="0 0 10 10" stroke="#777" fill="none"><path d="M0 0l10 10M10 0L0 10" /></svg>
        </Close>
      </DialogHead>
      <Search>
        <Address aria-label="Адрес" defaultValue="Веневская улица 7" />
        <Find type="button">Найти</Find>
      </Search>
      <StreetMap />
      <Flat>
        <label htmlFor={flat}>Веневская улица, 7, квартира</label>
        <FlatInput id={flat} defaultValue="108" />
        <span>, Москва</span>
      </Flat>
      <GreenButton type="submit" $wide>Отправить геопозицию</GreenButton>
    </Dialog>
  );
}

export default function App() {
  return (
    <>
      <Global />
      <Page>
        <EmergencyHeader />
        <WorkArea />
      </Page>
      <Scene>
        <HeaderEdge />
        <WorkArea />
        <Overlay>
          <GeoDialog />
        </Overlay>
      </Scene>
      <Caption>Форма отправки своего местоположения в чате</Caption>
    </>
  );
}
